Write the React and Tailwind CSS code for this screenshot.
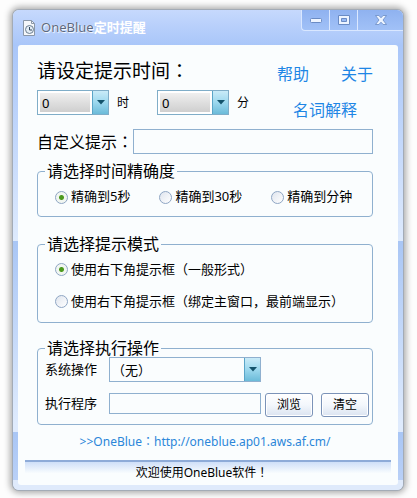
import React, { useState } from 'react';

const accuracies = ['精确到5秒', '精确到30秒', '精确到分钟'];

// Full-width punctuation, centred in its square
const Mark = ({ children }) => <span className="font-['Noto_Sans_CJK_TC',sans-serif]">{children}</span>;

const modes = [
  { id: 'normal', label: <>使用右下角提示框<Mark>（</Mark>一般形式<Mark>）</Mark></> },
  { id: 'bound', label: <>使用右下角提示框<Mark>（</Mark>绑定主窗口，最前端显示<Mark>）</Mark></> },
];

const Arrow = () => (
  <span className="pointer-events-none flex w-4 shrink-0 items-center justify-center border-l border-[#5aa5c8] bg-linear-to-b from-[#c9ebf8] via-[#9cd8ee] to-[#6bbbd9]">
    <svg width="8" height="5" viewBox="0 0 8 5">
      <path d="M0 0h8L4 4.5z" fill="#14536b" />
    </svg>
  </span>
);

const NumberSelect = ({ id, count }) => (
  <div className="flex h-[25px] w-[72px] justify-between border border-[#7fadc8] bg-white">
    <select
      id={id}
      className="m-[2px] w-[50px] appearance-none bg-linear-to-b from-[#efefef] to-[#cfcfcf] px-[2px] text-[13px] leading-5 outline-none"
    >
      {Array.from({ length: count }, (_, i) => (
        <option key={i}>{i}</option>
      ))}
    </select>
    <Arrow />
  </div>
);

const Radio = ({ name, checked, onChange, children }) => (
  <label className="flex h-5 items-center gap-[3px] text-[13px] whitespace-nowrap">
    <input
      type="radio"
      name={name}
      checked={checked}
      onChange={onChange}
      className="size-[13px] shrink-0 appearance-none rounded-full border border-[#8fa6c4] bg-linear-to-br from-[#dfe5ee] to-white checked:bg-[radial-gradient(circle,#4c9a1e_0_2px,#f1f6f1_3px)]"
    />
    {children}
  </label>
);

const Group = ({ title, className, children }) => (
  <fieldset className={`min-w-0 rounded-[4px] border border-[#8fb0cf] pr-[3px] pl-[7px] ${className}`}>
    <legend className="px-[2px] text-base leading-4">{title}</legend>
    {children}
  </fieldset>
);

const PushButton = ({ children }) => (
  <button
    type="button"
    className="h-6 w-12 rounded-[3px] border border-[#7b93b8] bg-linear-to-b from-white via-[#f3f7fc] to-[#dbe4f1] text-xs shadow-[inset_0_0_0_1px_#fff]"
  >
    {children}
  </button>
);

const TitleBar = () => (
  <header className="flex h-[35px] items-start justify-between bg-linear-to-b from-[#c6d9fd] via-[#b7cffb] to-[#a9c6f9] pl-[10px]">
    <div className="flex h-9 items-center gap-[6px]">
      <svg width="12" height="16" viewBox="0 0 12 16" fill="none">
        <path d="M.5.5h8l3 3v12H.5z" fill="#f5f7fa" stroke="#8a97a8" />
        <path d="M8.5.5v3h3" stroke="#8a97a8" />
        <circle cx="6.5" cy="9.5" r="4" fill="#e4edf5" stroke="#6d7f92" />
        <path d="M6.5 7v3H9" stroke="#34495e" />
      </svg>
      <h1 className="flex items-center text-[13px] whitespace-nowrap">
        <span className="text-[#5b6880] [text-shadow:0_0_1px_#fff,1px_1px_1px_#fff]">OneBlue</span>
        <span className="font-bold text-white">定时提醒</span>
      </h1>
    </div>
    <div className="flex h-[21px] divide-x divide-[#dbe8ff] overflow-hidden rounded-bl-[4px] border-b border-l border-[#d9e7ff] bg-linear-to-b from-[#8fb2f0] to-[#a1c1f7]">
      <button type="button" aria-label="最小化" className="flex w-7 items-center justify-center">
        <svg width="12" height="5" viewBox="0 0 12 5">
          <rect x=".5" y=".5" width="11" height="4" rx="1" fill="#edf4ff" stroke="#6a8bc4" />
        </svg>
      </button>
      <button type="button" aria-label="最大化" className="flex w-7 items-center justify-center">
        <svg width="12" height="10" viewBox="0 0 12 10">
          <path d="M.5.5h11v9H.5zM3.5 3.5v3h5v-3z" fill="#edf4ff" fillRule="evenodd" stroke="#6a8bc4" />
        </svg>
      </button>
      <button type="button" aria-label="关闭" className="flex w-[45px] items-center justify-center">
        <svg width="12" height="10" viewBox="0 0 12 10">
          <path d="M.5.5h3.400L6 2.800 8.100.5h3.400L8 5l3.500 4.500H8.100L6 7.200 3.900 9.500H.5L4 5z" fill="#edf4ff" stroke="#6a8bc4" strokeWidth=".8" />
        </svg>
      </button>
    </div>
  </header>
);

const App = () => {
  const [accuracy, setAccuracy] = useState(accuracies[0]);
  const [mode, setMode] = useState('normal');

  return (
    <div className="min-h-screen bg-[#fdfdfd] pt-[10px] pr-[14px] pb-[9px] pl-[13px] font-['Noto_Sans','Noto_Sans_CJK_SC',sans-serif] text-black">
      <div className="overflow-hidden rounded-[6px] bg-[#dfeafb] shadow-[0_0_0_1px_#a3abb6,0_0_6px_3px_#a9a9a9]">
        <TitleBar />
        <div className="bg-[linear-gradient(#a9c6f9,#dce9fd_190px,#dfebfd_196px,#a9c6f5_196px,#dfebfd_380px,#dfebfd_387px,#a9c6f5_387px,#b9d0f7_435px,#dfeafb_435px)] px-[5px] pb-[5px]">
          <main className="rounded-[3px] bg-[#fafdfe] pt-[13px]">
            <div className="pr-[25px] pl-[19px]">
              <div className="flex justify-between">
                <div>
                  <h2 className="text-[19px] leading-6">请设定提示时间<Mark>：</Mark></h2>
                  <div className="mt-[7px] flex items-center text-xs">
                    <NumberSelect id="hour" count={24} />
                    <label htmlFor="hour" className="ml-2 w-10">时</label>
                    <NumberSelect id="minute" count={60} />
                    <label htmlFor="minute" className="ml-2">分</label>
                  </div>
                </div>
                <nav className="flex w-24 flex-col gap-5 pt-2 text-base leading-4 text-[#1e86e5]">
                  <div className="flex justify-between">
                    <a href="#help">帮助</a>
                    <a href="#about">关于</a>
                  </div>
                  <a href="#terms" className="text-center">名词解释</a>
                </nav>
              </div>

              <div className="mt-[11px] flex items-center">
                <label htmlFor="message" className="text-base leading-6">自定义提示<Mark>：</Mark></label>
                <input id="message" type="text" className="h-[25px] min-w-0 flex-1 border border-[#8fb0cf] bg-transparent px-1 text-[13px] outline-none" />
              </div>

              <Group title="请选择时间精确度" className="mt-[9px] pb-[9px]">
                <div className="flex gap-[29px] pt-2 pl-[10px]">
                  {accuracies.map((item) => (
                    <Radio key={item} name="accuracy" checked={accuracy === item} onChange={() => setAccuracy(item)}>
                      <span>{item}</span>
                    </Radio>
                  ))}
                </div>
              </Group>

              <Group title="请选择提示模式" className="mt-[19px] pb-[11px]">
                <div className="flex flex-col gap-3 pt-[7px] pl-[10px]">
                  {modes.map((item) => (
                    <Radio key={item.id} name="mode" checked={mode === item.id} onChange={() => setMode(item.id)}>
                      <span>{item.label}</span>
                    </Radio>
                  ))}
                </div>
              </Group>

              <Group title="请选择执行操作" className="mt-[17px] pb-[7px]">
                <div className="grid grid-cols-[64px_1fr_108px] gap-y-[11px] pt-px text-[13px]">
                  <label htmlFor="action" className="self-center">系统操作</label>
                  <div className="flex h-[25px] border border-[#8fb0cf]">
                    <select id="action" className="min-w-0 flex-1 appearance-none px-[2px] font-['Noto_Sans_CJK_TC',sans-serif] outline-none">
                      <option>（无）</option>
                    </select>
                    <Arrow />
                  </div>
                  <label htmlFor="program" className="col-start-1 leading-5">执行程序</label>
                  <input id="program" type="text" className="h-[21px] min-w-0 border border-[#8fb0cf] bg-transparent px-1 outline-none" />
                  <div className="flex justify-between pl-1">
                    <PushButton>浏览</PushButton>
                    <PushButton>清空</PushButton>
                  </div>
                </div>
              </Group>

              <p className="mt-[6px] text-center text-xs leading-5 text-[#2b86d9]">
                <a href="http://oneblue.ap01.aws.af.cm/">&gt;&gt;OneBlue<Mark>：</Mark>http://oneblue.ap01.aws.af.cm/</a>
              </p>
            </div>

            <footer className="mx-[7px] mt-2 h-[25px] border-t-2 border-[#8eabd8] bg-linear-to-b from-[#cfdff8] to-[#fafdfe] to-50% pr-3 text-center text-xs leading-5">
              欢迎使用OneBlue软件<Mark>！</Mark>
            </footer>
          </main>
        </div>
      </div>
    </div>
  );
};

export default App;
